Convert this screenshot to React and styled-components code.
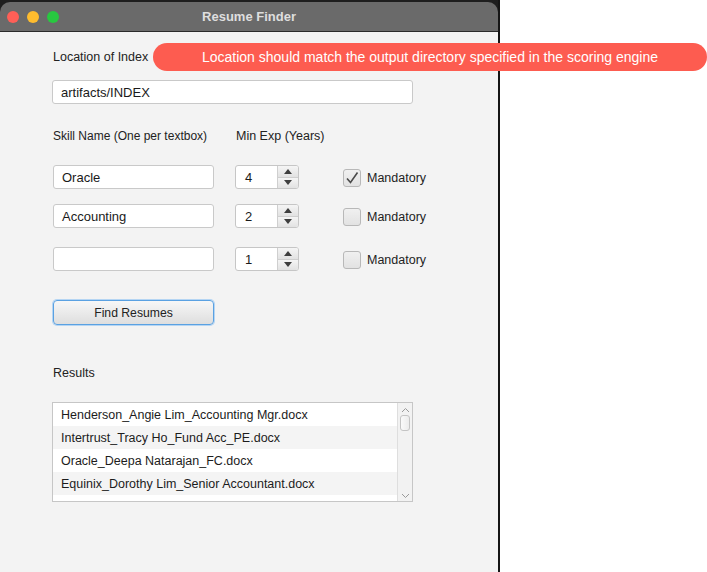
import React from 'react';
import styled, { createGlobalStyle } from 'styled-components';

const Global = createGlobalStyle`
  html, body { margin: 0; padding: 0; background: #ffffff; }
  body { font-family: "Liberation Sans", Arial, sans-serif; }
`;

const Page = styled.div`
  position: relative;
  width: 707px;
  height: 572px;
  overflow: hidden;
  background: #fff;
`;

const Frame = styled.div`
  width: 498px;
  height: 572px;
  background: #1e1e1e;
  border-right: 2px solid #151515;
  padding-top: 2px;
  box-sizing: content-box;
  display: flex;
  flex-direction: column;
`;

const TitleBar = styled.div`
  height: 29px;
  background: #6a6a6a;
  border-radius: 10px 10px 0 0;
  border-bottom: 1px solid #2a2a2a;
  display: flex;
  align-items: center;
  position: relative;
  padding-left: 7px;
  gap: 8px;
`;

const Light = styled.span`
  width: 12px;
  height: 12px;
  border-radius: 50%;
  background: ${p => p.$c};
`;

const Title = styled.div`
  position: absolute;
  left: 0;
  right: 0;
  text-align: center;
  color: #dedede;
  font-weight: bold;
  font-size: 13px;
`;

const Content = styled.div`
  flex: 1;
  background: #f3f3f3;
  padding: 17px 0 0 52px;
  display: flex;
  flex-direction: column;
  align-items: flex-start;
`;

const Label = styled.div`
  font-size: ${p => p.$fs || 12.5}px;
  color: #222;
  line-height: 16px;
  margin-left: 1px;
  margin-top: ${p => p.$mt || 0}px;
`;

const HeaderRow = styled.div`
  display: grid;
  grid-template-columns: 183px auto;
  margin-top: 24px;
`;

const TextField = styled.div`
  width: ${p => p.$w}px;
  height: 22px;
  background: #fff;
  border: 1px solid #c9c9c9;
  border-radius: 3px;
  font-size: 13px;
  color: #1a1a1a;
  display: flex;
  align-items: center;
  padding-left: 8px;
  box-sizing: content-box;
  margin-top: ${p => p.$mt || 0}px;
  margin-left: ${p => p.$ml || 0}px;
`;

const Tooltip = styled.div`
  position: absolute;
  left: 153px;
  top: 43px;
  width: 554px;
  height: 28px;
  border-radius: 14px;
  background: #fd5c50;
  color: #fff;
  font-size: 14px;
  display: flex;
  align-items: center;
  justify-content: center;
`;

const SkillGrid = styled.div`
  display: grid;
  grid-template-columns: 161px 64px auto;
  column-gap: 22px;
  align-items: center;
  margin-top: ${p => p.$mt}px;
`;

const Spinner = styled.div`
  width: 62px;
  height: 22px;
  border: 1px solid #c6c6c6;
  border-radius: 3px;
  background: #fff;
  display: flex;
`;

const SpinValue = styled.div`
  flex: 1;
  font-size: 13px;
  color: #1a1a1a;
  display: flex;
  align-items: center;
  padding-left: 9px;
`;

const SpinButtons = styled.div`
  width: 20px;
  display: flex;
  flex-direction: column;
  border-left: 1px solid #cfcfcf;
`;

const SpinBtn = styled.div`
  flex: 1;
  display: flex;
  align-items: center;
  justify-content: center;
  background: linear-gradient(#f5f5f5, #e2e2e2);
  border-top: ${p => (p.$down ? '1px solid #cfcfcf' : 'none')};
  border-radius: ${p => (p.$down ? '0 0 2px 0' : '0 2px 0 0')};
`;

const CheckWrap = styled.div`
  display: flex;
  align-items: center;
  gap: 6px;
  margin-left: 22px;
  padding-top: 2px;
  font-size: 12.5px;
  color: #222;
`;

const Box = styled.div`
  width: 16px;
  height: 16px;
  border: 1px solid #b8b8b8;
  border-radius: 3px;
  background: linear-gradient(#f0f0f0, #e2e2e2);
  display: flex;
  align-items: center;
  justify-content: center;
`;

const Button = styled.div`
  width: 159px;
  height: 23px;
  margin-top: 29px;
  margin-left: 1px;
  border: 1px solid #5aa1e2;
  box-shadow: 0 0 0 1px #b5d5f3;
  border-radius: 4px;
  background: linear-gradient(#f7f7f7, #dedede);
  font-size: 12.2px;
  color: #222;
  display: flex;
  align-items: center;
  justify-content: center;
`;

const List = styled.div`
  width: 359px;
  height: 98px;
  margin-top: 21px;
  border: 1px solid #c6c6c6;
  background: #fff;
  display: flex;
`;

const Rows = styled.div`
  flex: 1;
  display: flex;
  flex-direction: column;
  overflow: hidden;
`;

const Row = styled.div`
  height: 23px;
  flex-shrink: 0;
  background: ${p => (p.$alt ? '#f4f4f4' : '#fff')};
  font-size: 12.5px;
  color: #1c1c1c;
  display: flex;
  align-items: center;
  padding-left: 8px;
`;

const Scrollbar = styled.div`
  width: 14px;
  background: #f2f2f2;
  border-left: 1px solid #dedede;
  display: flex;
  flex-direction: column;
  align-items: center;
`;

const Thumb = styled.div`
  width: 10px;
  height: 16px;
  margin-top: 2px;
  border: 1px solid #c4c4c4;
  border-radius: 3px;
  background: linear-gradient(90deg, #fafafa, #ececec);
  box-sizing: border-box;
`;

const Arrow = ({ up }) => (
  <svg width="8" height="5" viewBox="0 0 8 5">
    <path d={up ? 'M0 5 L4 0 L8 5 Z' : 'M0 0 L4 5 L8 0 Z'} fill="#3e3e3e" />
  </svg>
);

const Chevron = ({ up }) => (
  <svg width="9" height="6" viewBox="0 0 9 6" style={{ marginTop: up ? 4 : 0, marginBottom: up ? 0 : 2 }}>
    <path d={up ? 'M1 5 L4.5 1.5 L8 5' : 'M1 1 L4.5 4.5 L8 1'} fill="none" stroke="#9a9a9a" strokeWidth="1" />
  </svg>
);

const Check = () => (
  <svg width="14" height="14" viewBox="0 0 14 14">
    <path d="M2 7.5 L5.5 11.5 L12.5 1.5" fill="none" stroke="#4a4a4a" strokeWidth="1.6" />
  </svg>
);

const skills = [
  { name: 'Oracle', exp: 4, mandatory: true, mt: 21 },
  { name: 'Accounting', exp: 2, mandatory: false, mt: 15 },
  { name: '', exp: 1, mandatory: false, mt: 19 },
];

const results = [
  'Henderson_Angie Lim_Accounting Mgr.docx',
  'Intertrust_Tracy Ho_Fund Acc_PE.docx',
  'Oracle_Deepa Natarajan_FC.docx',
  'Equinix_Dorothy Lim_Senior Accountant.docx',
  '',
];

export default function App() {
  return (
    <Page>
      <Global />
      <Frame>
        <TitleBar>
          <Light $c="#fe5f57" />
          <Light $c="#febc2e" />
          <Light $c="#28c840" />
          <Title>Resume Finder</Title>
        </TitleBar>
        <Content>
          <Label>Location of Index</Label>
          <TextField $w={351} $mt={15}>artifacts/INDEX</TextField>
          <HeaderRow>
            <Label $fs={12}>Skill Name (One per textbox)</Label>
            <Label $fs={12.5}>Min Exp (Years)</Label>
          </HeaderRow>
          {skills.map((s, i) => (
            <SkillGrid key={i} $mt={s.mt}>
              <TextField $w={151} $ml={1}>{s.name}</TextField>
              <Spinner>
                <SpinValue>{s.exp}</SpinValue>
                <SpinButtons>
                  <SpinBtn><Arrow up /></SpinBtn>
                  <SpinBtn $down><Arrow /></SpinBtn>
                </SpinButtons>
              </Spinner>
              <CheckWrap>
                <Box>{s.mandatory && <Check />}</Box>
                Mandatory
              </CheckWrap>
            </SkillGrid>
          ))}
          <Button>Find Resumes</Button>
          <Label $mt={40}>Results</Label>
          <List>
            <Rows>
              {results.map((r, i) => (
                <Row key={i} $alt={i % 2 === 1}>{r}</Row>
              ))}
            </Rows>
            <Scrollbar>
              <Chevron up />
              <Thumb />
              <div style={{ flex: 1 }} />
              <Chevron />
            </Scrollbar>
          </List>
        </Content>
      </Frame>
      <Tooltip>Location should match the output directory specified in the scoring engine</Tooltip>
    </Page>
  );
}
